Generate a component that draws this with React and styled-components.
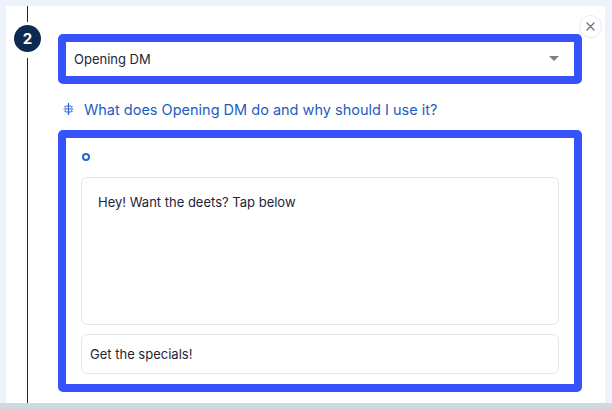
import styled, { createGlobalStyle } from 'styled-components';

const GlobalStyle = createGlobalStyle`
  html, body {
    margin: 0;
    padding: 0;
    background: #eef3fb;
    font-family: "Inter", "Noto Sans", sans-serif;
  }
`;

const Page = styled.div`
  width: 612px;
  height: 409px;
  display: flex;
  flex-direction: column;
  background: #eef3fb;
  overflow: hidden;
`;

const Card = styled.div`
  position: relative;
  margin: 6px 7px 0 6px;
  height: 397px;
  background: #ffffff;
  display: flex;
`;

const Footer = styled.div`
  flex: 1;
  background: #d2d8e1;
`;

const Rail = styled.div`
  width: 43px;
  display: flex;
  flex-direction: column;
  align-items: center;
`;

const Line = styled.div`
  width: 1px;
  background: #1b2433;
  height: ${(p) => (p.$grow ? 'auto' : '16px')};
  flex: ${(p) => (p.$grow ? 1 : 'none')};
`;

const Badge = styled.div`
  width: 27px;
  height: 27px;
  margin: 3px 0 6px;
  border-radius: 50%;
  background: #0e2a50;
  color: #fff;
  font-weight: 700;
  font-size: 15px;
  display: flex;
  align-items: center;
  justify-content: center;
`;

const Content = styled.div`
  margin-left: 9px;
  width: 524px;
  padding-top: 28px;
  display: flex;
  flex-direction: column;
`;

const Outline = styled.div`
  border: 8px solid #3653fb;
  border-radius: 5px;
  background: #fff;
  margin-top: ${(p) => p.$mt || 0}px;
`;

const Select = styled.div`
  height: 34px;
  display: flex;
  align-items: center;
  justify-content: space-between;
  padding: 0 15px 0 8px;
  font-size: 13px;
  color: #1d2636;
`;

const Help = styled.div`
  display: flex;
  align-items: center;
  gap: 10px;
  margin: 16px 0 0 5px;
  height: 18px;
  color: #1c5cc2;
  font-size: 14.5px;
  font-weight: 400;
`;

const Body = styled.div`
  padding: 15px 15px 10px;
  display: flex;
  flex-direction: column;
`;

const Ring = styled.div`
  width: 4px;
  height: 4px;
  margin-left: 1px;
  border: 2px solid #2a63d4;
  border-radius: 50%;
`;

const Field = styled.div`
  border: 1px solid #e4e6ea;
  border-radius: 6px;
  color: #1d2636;
  font-size: 13px;
  height: ${(p) => p.$h}px;
  padding: ${(p) => p.$pad};
  display: flex;
  align-items: ${(p) => (p.$center ? 'center' : 'flex-start')};
  margin-top: ${(p) => p.$mt}px;
  box-sizing: border-box;
`;

const Close = styled.div`
  position: absolute;
  top: 10px;
  right: 4px;
  width: 21px;
  height: 21px;
  border-radius: 50%;
  background: #fff;
  box-shadow: 0 0 0 1px #eceef1, 0 1px 2px rgba(0, 0, 0, 0.06);
  display: flex;
  align-items: center;
  justify-content: center;
`;

export default function App() {
  return (
    <Page>
      <GlobalStyle />
      <Card>
        <Rail>
          <Line />
          <Badge>2</Badge>
          <Line $grow />
        </Rail>
        <Content>
          <Outline>
            <Select>
              <span>Opening DM</span>
              <svg width="10" height="6" viewBox="0 0 10 6">
                <path d="M0 0 H10 L5 5 Z" fill="#7b7f88" />
              </svg>
            </Select>
          </Outline>
          <Help>
            <svg width="11" height="12" viewBox="0 0 11 12" fill="none" stroke="#2a63d4" strokeWidth="1.2" strokeLinecap="round">
              <path d="M5.5 0.5 V11.5" />
              <path d="M1 6 H10" />
              <path d="M3.5 3 H7.5" />
              <path d="M3.5 9 H7.5" />
              <path d="M2 3.5 L2.6 4.1 M9 3.5 L8.4 4.1 M2 8.5 L2.6 7.9 M9 8.5 L8.4 7.9" />
            </svg>
            <span>What does Opening DM do and why should I use it?</span>
          </Help>
          <Outline $mt={12}>
            <Body>
              <Ring />
              <Field $h={148} $pad="16px 16px" $mt={16}>Hey! Want the deets? Tap below</Field>
              <Field $h={40} $pad="0 8px" $mt={9} $center>Get the specials!</Field>
            </Body>
          </Outline>
        </Content>
        <Close>
          <svg width="9" height="9" viewBox="0 0 9 9" stroke="#6f737b" strokeWidth="1.4" strokeLinecap="round">
            <path d="M1 1 L8 8 M8 1 L1 8" />
          </svg>
        </Close>
      </Card>
      <Footer />
    </Page>
  );
}
